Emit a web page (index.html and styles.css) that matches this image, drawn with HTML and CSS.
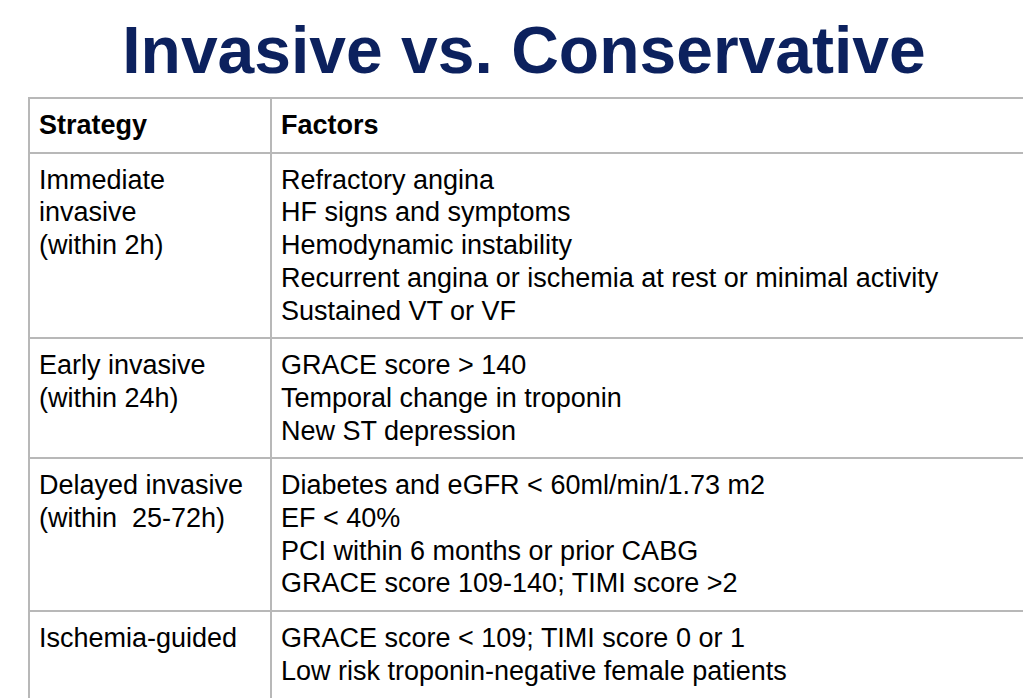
FILE: index.html
```html
<!DOCTYPE html>
<html>
<head>
<meta charset="utf-8">
<link rel="stylesheet" href="styles.css">
</head>
<body>
<div class="slide">
  <h1 class="title">Invasive vs. Conservative</h1>
  <table class="grid">
    <tr class="head">
      <th class="c1">Strategy</th>
      <th class="c2">Factors</th>
    </tr>
    <tr class="r1">
      <td class="c1">Immediate<br>invasive<br>(within 2h)</td>
      <td class="c2">Refractory angina<br>HF signs and symptoms<br>Hemodynamic instability<br>Recurrent angina or ischemia at rest or minimal activity<br>Sustained VT or VF</td>
    </tr>
    <tr class="r2">
      <td class="c1">Early invasive<br>(within 24h)</td>
      <td class="c2">GRACE score &gt; 140<br>Temporal change in troponin<br>New ST depression</td>
    </tr>
    <tr class="r3">
      <td class="c1">Delayed invasive<br>(within&nbsp; 25-72h)</td>
      <td class="c2">Diabetes and eGFR &lt; 60ml/min/1.73 m2<br>EF &lt; 40%<br>PCI within 6 months or prior CABG<br>GRACE score 109-140; TIMI score &gt;2</td>
    </tr>
    <tr class="r4">
      <td class="c1">Ischemia-guided</td>
      <td class="c2">GRACE score &lt; 109; TIMI score 0 or 1<br>Low risk troponin-negative female patients</td>
    </tr>
  </table>
</div>
</body>
</html>
```
FILE: styles.css
```css
html, body {
  margin: 0;
  padding: 0;
  background: #ffffff;
  overflow: hidden;
}
.slide {
  width: 1023px;
  height: 698px;
  overflow: hidden;
  font-family: "Liberation Sans", Arial, sans-serif;
  color: #000;
}
.title {
  margin: 0;
  padding: 17px 0 0 25px;
  height: 97px;
  box-sizing: border-box;
  text-align: center;
  font-size: 66px;
  line-height: 66px;
  font-weight: bold;
  color: #0c215e;
}
.grid {
  margin: 0 0 0 28px;
  width: 1020px;
  border-collapse: collapse;
  font-size: 27px;
  line-height: 32.7px;
  table-layout: fixed;
}
.grid th, .grid td {
  border: 2px solid #b8b8b8;
  text-align: left;
  vertical-align: top;
  padding: 10px 10px 10px 9px;
}
.grid th {
  font-weight: bold;
}
.grid .c1 {
  width: 221px;
}
```
